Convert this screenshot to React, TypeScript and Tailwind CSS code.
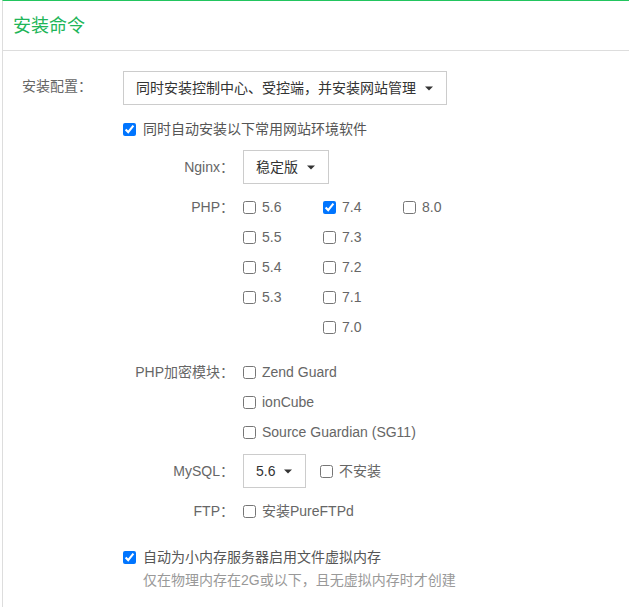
import { ReactNode } from 'react';

const FONT = { fontFamily: '"Liberation Sans", "Noto Sans CJK SC", sans-serif' };

function Caret() {
  return (
    <svg width="8" height="5" viewBox="0 0 8 5" className="shrink-0">
      <path d="M0 0.5h8L4 4.5z" fill="#333" />
    </svg>
  );
}

function Select({ value, width }: { value: string; width: string }) {
  return (
    <div className={`flex items-center justify-between h-[34px] ${width} pl-[12px] pr-[13px] border border-[#ccc] bg-white text-[14px] text-[#333]`}>
      <span>{value}</span>
      <Caret />
    </div>
  );
}

function Check({ label, checked = false, className = '' }: { label: string; checked?: boolean; className?: string }) {
  return (
    <label className={`flex items-center gap-[6px] text-[14px] text-[#666] whitespace-nowrap ${className}`}>
      <input type="checkbox" defaultChecked={checked} className="w-[13px] h-[13px] m-0" />
      <span>{label}</span>
    </label>
  );
}

function Row({ label, children, className = '' }: { label: string; children: ReactNode; className?: string }) {
  return (
    <div className={`flex ${className}`}>
      <div className="w-[120px] shrink-0 flex items-center justify-end h-[30px] pr-[9px] text-[14px] text-[#666] whitespace-nowrap">
        {label}
      </div>
      <div className="flex-1">{children}</div>
    </div>
  );
}

const PHP_COLS = [
  ['5.6', '5.5', '5.4', '5.3'],
  ['7.4', '7.3', '7.2', '7.1', '7.0'],
  ['8.0'],
];

export default function App() {
  return (
    <div className="w-[629px] h-[607px] bg-white overflow-hidden" style={FONT}>
      <div className="ml-[2px] h-full border-l border-t border-l-[#ddd] border-t-[#22c55e]">
        {/* Header */}
        <div className="h-[50px] flex items-center pl-[10px] pt-[1px] border-b border-[#ddd]">
          <h3 className="text-[18px] text-[#20b558] font-normal">安装命令</h3>
        </div>

        {/* Body */}
        <div className="pt-[20px] pl-[19px]">
          <div className="flex">
            <div className="w-[101px] shrink-0 pt-[5px] text-[14px] text-[#666]">安装配置：</div>
            <Select value="同时安装控制中心、受控端，并安装网站管理" width="w-[324px]" />
          </div>

          <div className="ml-[101px] mt-[14px] h-[20px] flex items-center">
            <label className="flex items-center gap-[7px] text-[14px] text-[#555]">
              <input type="checkbox" defaultChecked className="w-[13px] h-[13px] m-0" />
              <span>同时自动安装以下常用网站环境软件</span>
            </label>
          </div>

          <div className="ml-[101px]">
            <div className="flex mt-[11px]">
              <div className="w-[120px] shrink-0 flex items-center justify-end h-[34px] pr-[9px] text-[14px] text-[#666]">Nginx：</div>
              <Select value="稳定版" width="w-[86px]" />
            </div>

            <Row label="PHP：" className="mt-[8px]">
              <div className="flex">
                {PHP_COLS.map((col, i) => (
                  <div key={i} className="w-[80px] flex flex-col">
                    {col.map((v) => (
                      <Check key={v} label={v} checked={v === '7.4'} className="h-[30px]" />
                    ))}
                  </div>
                ))}
              </div>
            </Row>

            <Row label="PHP加密模块：" className="mt-[15px]">
              <div className="flex flex-col">
                {['Zend Guard', 'ionCube', 'Source Guardian (SG11)'].map((v) => (
                  <Check key={v} label={v} className="h-[30px]" />
                ))}
              </div>
            </Row>

            <div className="flex mt-[7px]">
              <div className="w-[120px] shrink-0 flex items-center justify-end h-[34px] pr-[9px] text-[14px] text-[#666]">MySQL：</div>
              <div className="flex items-center gap-[14px]">
                <Select value="5.6" width="w-[63px]" />
                <Check label="不安装" />
              </div>
            </div>

            <Row label="FTP：" className="mt-[8px]">
              <Check label="安装PureFTPd" className="h-[30px]" />
            </Row>
          </div>

          <div className="ml-[101px] mt-[21px] h-[20px] flex items-center">
            <label className="flex items-center gap-[7px] text-[14px] text-[#555]">
              <input type="checkbox" defaultChecked className="w-[13px] h-[13px] m-0" />
              <span>自动为小内存服务器启用文件虚拟内存</span>
            </label>
          </div>
          <div className="ml-[121px] mt-[3px] h-[20px] flex items-center text-[14px] text-[#999]">
            仅在物理内存在2G或以下，且无虚拟内存时才创建
          </div>
        </div>
      </div>
    </div>
  );
}
